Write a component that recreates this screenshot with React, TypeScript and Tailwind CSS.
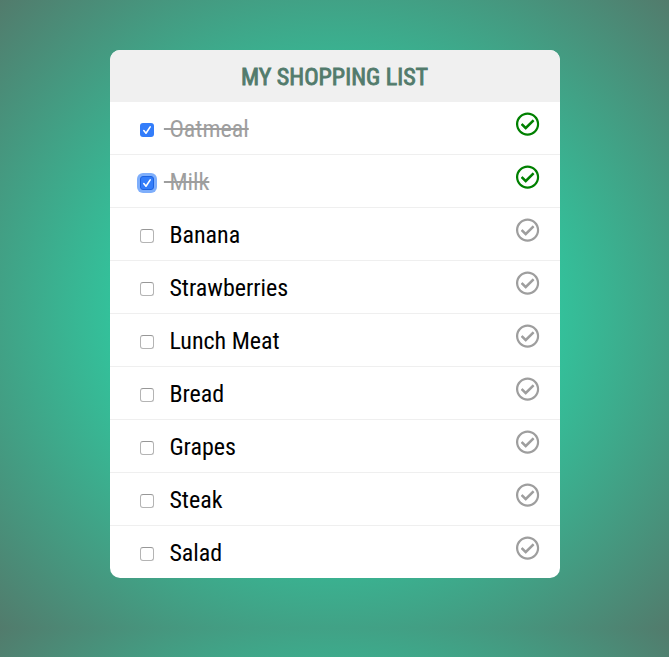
import { FaRegCheckCircle } from "react-icons/fa";

const items = [
  { name: "Oatmeal", done: true, focused: false },
  { name: "Milk", done: true, focused: true },
  { name: "Banana", done: false, focused: false },
  { name: "Strawberries", done: false, focused: false },
  { name: "Lunch Meat", done: false, focused: false },
  { name: "Bread", done: false, focused: false },
  { name: "Grapes", done: false, focused: false },
  { name: "Steak", done: false, focused: false },
  { name: "Salad", done: false, focused: false },
];

function Box({ done, focused }: { done: boolean; focused: boolean }) {
  if (!done) {
    return <span className="mt-[3px] size-3.5 rounded-[3px] border border-[#b4b4b4] border-t-[#979797] bg-white" />;
  }
  return (
    <span
      className={
        focused
          ? "mt-[3px] flex size-3.5 items-center justify-center rounded-[3px] border border-[#1c62e0] bg-[#337dfa] ring-3 ring-[#7eaefb]"
          : "mt-[3px] flex size-3.5 items-center justify-center rounded-[3px] bg-[#337dfa]"
      }
    >
      <svg viewBox="0 0 14 14" className="size-3.5 shrink-0" fill="none" stroke="white" strokeWidth="1.6" strokeLinecap="round" strokeLinejoin="round">
        <path d="M3.8 7.6 L6 10.2 L10.2 3.9" />
      </svg>
    </span>
  );
}

export default function App() {
  return (
    <div className="h-[657px] bg-[radial-gradient(#18ffc4,#527b6c)] bg-[length:100%_628px] pt-[50px] font-['Roboto_Condensed','Roboto',sans-serif] text-2xl [font-stretch:75%]">
      <div className="mx-auto w-[450px] overflow-hidden rounded-[10px] bg-white">
        <h1 className="flex h-[52px] items-center justify-center bg-[#f0f0f0] pt-0.5 font-normal text-[#527b6c] [-webkit-text-stroke:0.9px_#527b6c]">
          MY SHOPPING LIST
        </h1>
        <ul className="divide-y divide-[#efefef]">
          {items.map((item) => (
            <li key={item.name} className="flex h-[53px] items-center pr-5 pl-[30px] last:h-[52px]">
              <Box done={item.done} focused={item.focused} />
              <span className={item.done ? "ml-[10.4px] flex-1 whitespace-pre pt-0.5 text-[#9e9e9e] line-through" : "ml-[10.4px] flex-1 whitespace-pre pt-0.5 text-black"}>
                {" " + item.name}
              </span>
              <FaRegCheckCircle className={item.done ? "-mt-2 size-6 -translate-x-[0.4px] text-[#008000]" : "-mt-2 size-6 -translate-x-[0.4px] text-[#9e9e9e]"} />
            </li>
          ))}
        </ul>
      </div>
    </div>
  );
}
